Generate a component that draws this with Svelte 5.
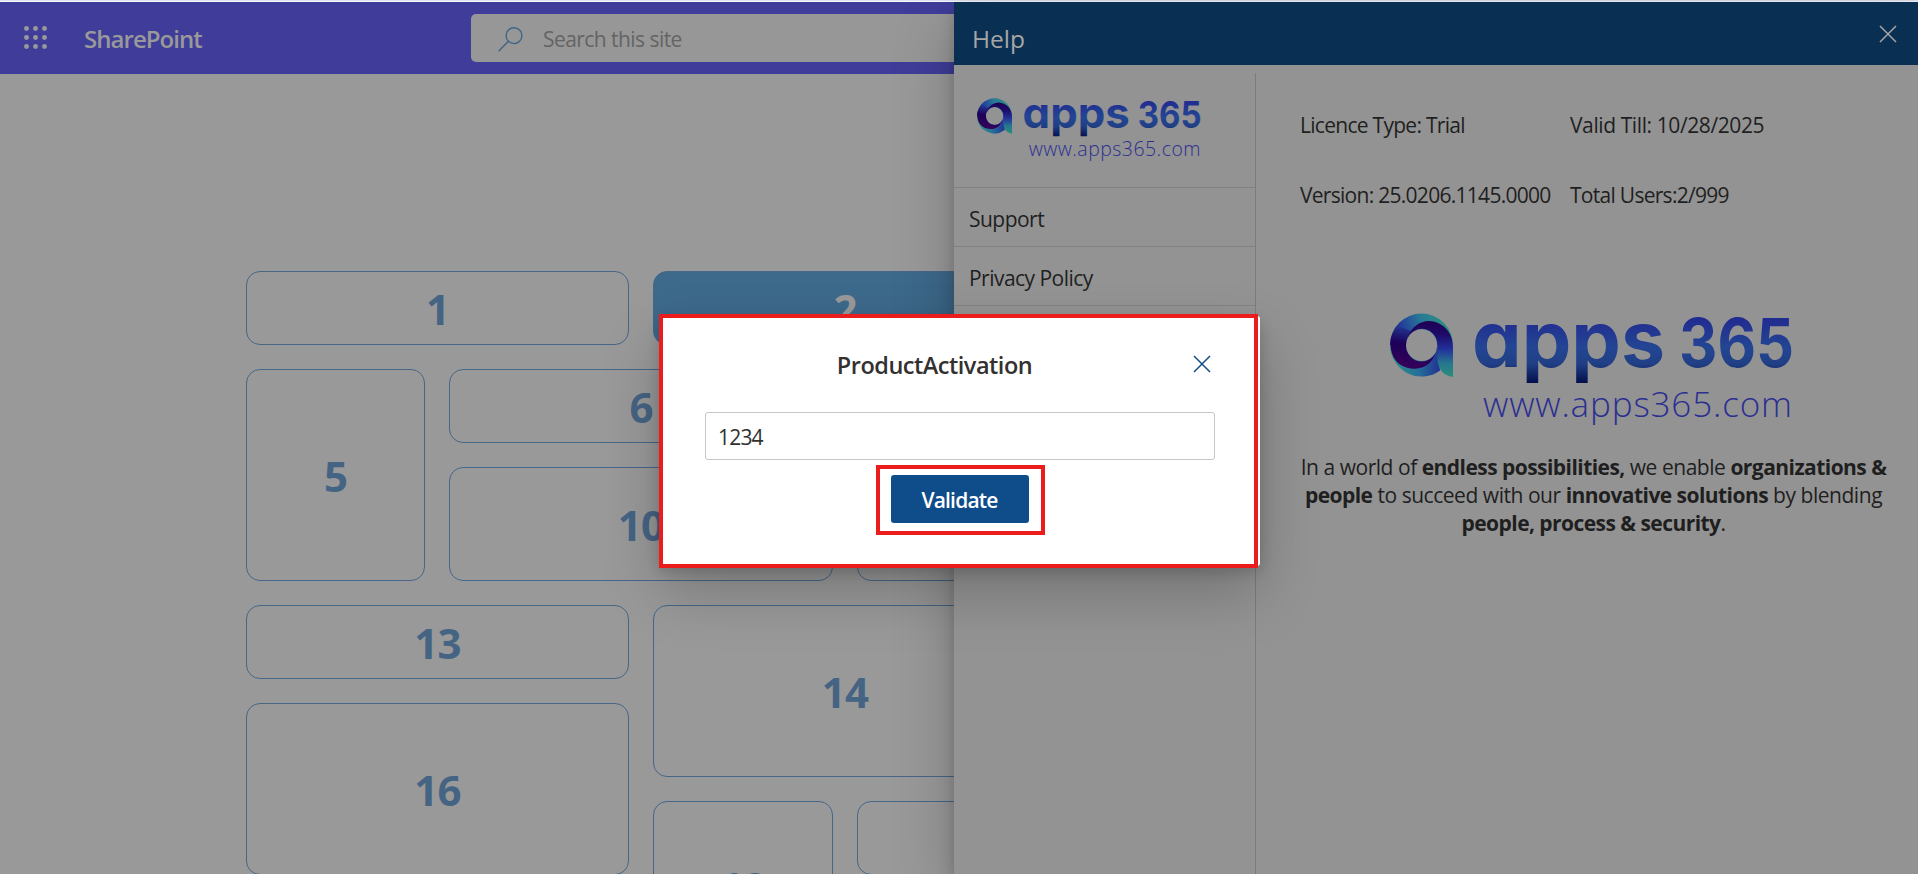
<script>
  const cards = [
    { n: 1, area: '1 / 1 / 2 / 3' },
    { n: 2, area: '1 / 3 / 2 / 5', filled: true },
    { n: 5, area: '2 / 1 / 4 / 2' },
    { n: 6, area: '2 / 2 / 3 / 4' },
    { n: 10, area: '3 / 2 / 4 / 4' },
    { n: '', area: '3 / 4 / 4 / 6' },
    { n: 13, area: '4 / 1 / 5 / 3' },
    { n: 14, area: '4 / 3 / 6 / 5' },
    { n: 16, area: '5 / 1 / 7 / 3' },
    { n: 18, area: '6 / 3 / 8 / 4' },
    { n: '', area: '6 / 4 / 7 / 6' }
  ];
  const dots = [2.5, 11.5, 20.5];
</script>

{#snippet logo(id)}
  <svg class="logo" viewBox="0 0 403 113" aria-label="apps 365">
    <defs>
      <linearGradient id="{id}w" gradientUnits="userSpaceOnUse" x1="0" y1="4" x2="0" y2="71">
        <stop offset="0" stop-color="#212a90" /><stop offset=".45" stop-color="#234593" /><stop offset=".7" stop-color="#203f85" /><stop offset="1" stop-color="#020d48" />
      </linearGradient>
      <linearGradient id="{id}r" gradientUnits="userSpaceOnUse" x1="2" y1="34" x2="56" y2="12">
        <stop offset="0" stop-color="#22106a" /><stop offset=".3" stop-color="#23409a" /><stop offset=".65" stop-color="#287a96" /><stop offset="1" stop-color="#2a8d80" />
      </linearGradient>
      <linearGradient id="{id}b" gradientUnits="userSpaceOnUse" x1="4" y1="0" x2="52" y2="0">
        <stop offset="0" stop-color="#2a8d86" /><stop offset=".5" stop-color="#25709a" /><stop offset="1" stop-color="#222c93" />
      </linearGradient>
      <linearGradient id="{id}p" gradientUnits="userSpaceOnUse" x1="12" y1="55" x2="20" y2="12">
        <stop offset="0" stop-color="#38005a" /><stop offset=".55" stop-color="#1d0058" /><stop offset="1" stop-color="#23409a" />
      </linearGradient>
      <linearGradient id="{id}l" gradientUnits="userSpaceOnUse" x1="0" y1="8" x2="0" y2="64">
        <stop offset="0" stop-color="#1f0055" /><stop offset=".25" stop-color="#1f0b68" /><stop offset=".5" stop-color="#22309a" /><stop offset=".75" stop-color="#27768f" /><stop offset="1" stop-color="#2a8f78" />
      </linearGradient>
    </defs>
    <path d="M0 32A31.5 31.5 0 0 1 63 32L47 32A15.5 15.8 0 0 0 16 32Z" fill="url(#{id}r)" />
    <path d="M0 32A31.5 32 0 0 0 50 57.5L47.5 32A15.5 15.8 0 0 1 16 32Z" fill="url(#{id}b)" />
    <path d="M1.5 23C-2 38 4 55 24 55.7C36 56 45 48 47.3 33A15.5 15.8 0 0 1 16 32C16 27 18 22 22 18L10 14Q4 17 1.5 23Z" fill="url(#{id}p)" />
    <path d="M17 27C20 14 30 8 39 8C54 9 63 20 63 34V64C53 63 47.5 55 47.3 45V32A15.5 15.8 0 0 0 17 27Z" fill="url(#{id}l)" />
    <text class="word" x="82" y="54" font-size="77" textLength="193" lengthAdjust="spacingAndGlyphs" fill="url(#{id}w)">apps</text>
    <text class="word" x="289" y="53.5" font-size="67" textLength="115" lengthAdjust="spacingAndGlyphs" fill="url(#{id}w)">365</text>
    <text class="url" x="93" y="103.5" font-size="35" textLength="309" fill="#2c2f92">www.apps365.com</text>
  </svg>
{/snippet}

{#snippet cross()}
  <svg class="cross" viewBox="0 0 18 18"><path d="M1 1L17 17M17 1L1 17" fill="none" stroke="currentColor" stroke-width="1.5" /></svg>
{/snippet}

<div class="app">
  <header class="suite">
    <svg class="waffle" viewBox="0 0 23 23">
      {#each dots as y}{#each dots as x}<circle cx={x} cy={y} r="2.45" fill="#999" />{/each}{/each}
    </svg>
    <span class="brand">SharePoint</span>
    <div class="search">
      <svg class="lens" viewBox="0 0 25 25"><g fill="none" stroke="#3f6585" stroke-width="1.4"><circle cx="16" cy="8.7" r="7.9" /><path d="M10.4 14.3L.6 24.2" /></g></svg>
      <span>Search this site</span>
    </div>
  </header>

  <main class="grid">
    {#each cards as c}
      <div class="card" class:filled={c.filled} style:grid-area={c.area}><span>{c.n}</span></div>
    {/each}
  </main>

  <aside class="panel">
    <div class="panel-head"><span>Help</span>{@render cross()}</div>
    <div class="panel-body">
      <nav>
        <div class="nav-logo">{@render logo('s')}</div>
        <div class="item">Support</div>
        <div class="item">Privacy Policy</div>
      </nav>
      <section>
        <div class="facts">
          <span class="type">Licence Type: Trial</span><span class="valid">Valid Till: 10/28/2025</span>
          <span class="version">Version: 25.0206.1145.0000</span><span class="users">Total Users:2/999</span>
        </div>
        <div class="big-logo">{@render logo('b')}</div>
        <p>In a world of <b>endless possibilities,</b> we enable <b>organizations &amp;</b><br /><b>people</b> to succeed with our <b>innovative solutions</b> by blending<br /><b>people, process &amp; security</b>.</p>
      </section>
    </div>
  </aside>

  <div class="dialog">
    <div class="title"><h2>ProductActivation</h2>{@render cross()}</div>
    <div class="field">1234</div>
    <div class="actions"><div class="ring"><button>Validate</button></div></div>
  </div>
  <div class="frame"></div>
</div>

<style>
  :global(body) { margin: 0; overflow: hidden; }
  .app { position: relative; box-sizing: border-box; height: 874px; overflow: hidden; padding-top: 2px; background: linear-gradient(#dfe2f0 1px, #f7f8fd 1px, #f7f8fd 2px, #999 2px); font-family: "Open Sans", "Noto Sans", sans-serif; font-size: 21px; white-space: nowrap; }
  .suite { display: flex; align-items: center; height: 72px; padding-left: 24px; background: #3f3d99; }
  .waffle { width: 23px; height: 23px; margin-top: -1px; }
  .brand { width: 387px; margin-left: 37px; padding-top: 1px; color: #999; font-size: 24px; font-weight: 600; letter-spacing: -.95px; }
  .search { display: flex; align-items: center; width: 700px; height: 48px; border-radius: 5px; background: #979797; color: #646464; letter-spacing: -.55px; }
  .search span { padding-top: 2px; }
  .lens { width: 25px; height: 25px; margin: 3px 20px 0 27px; }
  .grid { display: grid; grid-template-columns: 179px 180px 180px 180px 180px; grid-template-rows: 74px 74px 114px 74px 74px 74px 71px; gap: 24px; padding: 197px 0 0 246px; }
  .card { display: flex; align-items: center; justify-content: center; box-sizing: border-box; border: 1px solid #456788; border-radius: 14px; color: #456484; font-size: 42px; font-weight: 700; letter-spacing: -.8px; }
  .card span { padding-top: 1px; }
  .filled { background: #3d698b; color: #999; }
  .panel { position: absolute; top: 2px; right: 0; width: 964px; height: 872px; background: #939393; color: #1f1f1f; box-shadow: 0 26px 58px rgba(0,0,0,.22), 0 5px 14px rgba(0,0,0,.18); }
  .panel-head { display: flex; align-items: center; justify-content: space-between; height: 63px; padding: 0 21px 0 18px; background: #092f53; color: #a6a6a6; font-size: 24.5px; }
  .panel-head span { padding-top: 10px; }
  .cross { width: 18px; height: 18px; }
  .panel-body { display: flex; height: 809px; }
  nav { width: 301px; margin-top: 8px; border-right: 1px solid #7c7c7c; }
  .nav-logo { height: 89px; padding: 25px 0 0 23px; border-bottom: 1px solid #828282; }
  .nav-logo .logo { width: 224px; height: 63px; }
  .item { height: 58px; padding-left: 15px; border-bottom: 1px solid #828282; line-height: 62px; letter-spacing: -.53px; }
  .logo { display: block; }
  .word { font-family: Inter, sans-serif; font-weight: 700; font-feature-settings: "cv11" 1; }
  .url { font-family: "Open Sans", sans-serif; font-weight: 300; }
  section { padding: 25px 0 0 44px; }
  .facts { display: grid; grid-template-columns: 270px 1fr; grid-auto-rows: 70px; line-height: 70px; }
  .type { letter-spacing: -.72px; }
  .valid { letter-spacing: -.4px; }
  .version { letter-spacing: -.72px; }
  .users { letter-spacing: -.72px; }
  .big-logo { width: 403px; height: 113px; margin: 83px 0 0 90px; }
  p { width: 587px; margin: 27px 0 0; line-height: 28px; text-align: center; letter-spacing: -.46px; }
  b { letter-spacing: -.55px; }
  .dialog { position: absolute; left: 660px; top: 316px; width: 600px; height: 250px; box-sizing: border-box; padding: 27px 45px 0; border-radius: 3px; background: #fff; color: #323130; box-shadow: 0 26px 58px rgba(0,0,0,.22), 0 5px 14px rgba(0,0,0,.18); }
  .title { display: grid; grid-template-columns: 1fr 18px; align-items: center; height: 42px; padding-right: 4px; color: #0f4c8a; }
  h2 { margin: 0; padding: 1px 29px 0 0; color: #323130; text-align: center; font-size: 23.5px; font-weight: 600; letter-spacing: -.5px; }
  .field { height: 46px; margin-top: 27px; padding-left: 12px; border: 1px solid #c8c6c4; border-radius: 3px; line-height: 49px; letter-spacing: -.8px; }
  .actions { display: flex; justify-content: center; margin-top: 5px; }
  .ring { border: 4px solid #ea1c1c; padding: 6px 12px 8px 11px; }
  button { display: block; width: 138px; height: 48px; padding: 2px 0 0; border: 0; border-radius: 3px; background: #0f4c8a; color: #fff; font: 600 21px "Open Sans", sans-serif; letter-spacing: -.8px; }
  .frame { position: absolute; left: 659px; top: 314px; width: 591px; height: 246px; border: 4px solid #ea1c1c; }
</style>
